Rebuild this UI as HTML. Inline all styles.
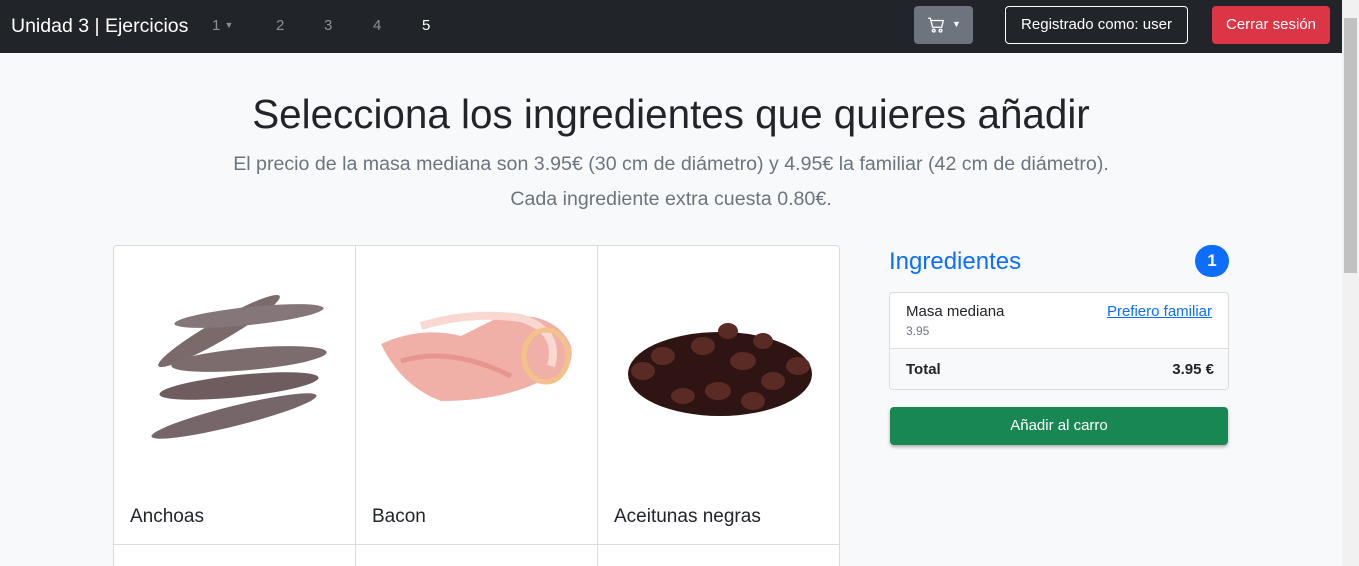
<!DOCTYPE html>
<html><head><meta charset="utf-8"><style>
*{box-sizing:border-box;margin:0;padding:0}
html,body{overflow:hidden}
body{width:1359px;height:566px;background:#f8f9fa;font-family:"Liberation Sans",sans-serif;color:#212529;position:relative}
.a{position:absolute;white-space:nowrap}
nav{position:absolute;left:0;top:0;width:1342px;height:53px;background:#212529}
.sb{position:absolute;left:1342px;top:0;width:17px;height:566px;background:#f1f1f1}
.sb div{position:absolute;left:2px;top:18px;width:13px;height:255px;background:#c1c1c1}
.card{position:absolute;top:245px;width:243px;height:300px;background:#fff;border:1px solid #dcdcdc}
.card .t{position:absolute;left:16px;top:260px;font-size:19px}
.row2{position:absolute;top:544px;width:243px;height:22px;background:#fff;border:1px solid #dcdcdc;border-bottom:none}
</style></head><body>
<nav>
<div class="a" style="left:11px;top:15px;color:#fff;font-size:19.5px">Unidad 3 | Ejercicios</div>
<div class="a" style="left:212px;top:17px;color:#8c8f93;font-size:15px">1 <span style="font-size:9px;vertical-align:2px">▼</span></div>
<div class="a" style="left:276px;top:17px;color:#8c8f93;font-size:15px">2</div>
<div class="a" style="left:324px;top:17px;color:#8c8f93;font-size:15px">3</div>
<div class="a" style="left:373px;top:17px;color:#8c8f93;font-size:15px">4</div>
<div class="a" style="left:422px;top:17px;color:#fff;font-size:15px">5</div>
<div class="a" style="left:914px;top:6px;width:59px;height:38px;background:#6c757d;border-radius:4px">
<svg width="18" height="18" viewBox="0 0 16 16" style="position:absolute;left:13px;top:10px" fill="none" stroke="#fff" stroke-width="1.2"><path d="M1 2h2l2 8h8l1.5-6H4"/><circle cx="6" cy="13" r="1.2"/><circle cx="12" cy="13" r="1.2"/></svg>
<span style="position:absolute;left:38px;top:13px;color:#fff;font-size:9px">▼</span></div>
<div class="a" style="left:1005px;top:6px;width:183px;height:38px;border:1px solid #fff;border-radius:4px;color:#fff;font-size:15px;text-align:center;line-height:36px">Registrado como: user</div>
<div class="a" style="left:1212px;top:6px;width:118px;height:38px;background:#dc3545;border-radius:4px;color:#fff;font-size:15px;text-align:center;line-height:38px">Cerrar sesión</div>
</nav>
<div class="sb"><div></div></div>
<div class="a" style="left:0;width:1342px;top:91px;text-align:center;font-size:40.4px;color:#212529">Selecciona los ingredientes que quieres añadir</div>
<div class="a" style="left:0;width:1342px;top:153px;text-align:center;font-size:19.6px;color:#6c757d">El precio de la masa mediana son 3.95€ (30 cm de diámetro) y 4.95€ la familiar (42 cm de diámetro).</div>
<div class="a" style="left:0;width:1342px;top:188px;text-align:center;font-size:19.6px;color:#6c757d">Cada ingrediente extra cuesta 0.80€.</div>

<div class="card" style="left:113px;border-radius:4px 0 0 0">
<svg class="a" style="left:25px;top:25px" width="200" height="190" viewBox="0 0 200 190">
<g fill="#7a6a6a">
<ellipse cx="80" cy="60" rx="70" ry="10" transform="rotate(-30 80 60)"/>
<ellipse cx="110" cy="45" rx="75" ry="9" transform="rotate(-6 110 45)" fill="#85767a"/>
<ellipse cx="110" cy="88" rx="78" ry="11" transform="rotate(-5 110 88)" fill="#7d6c6e"/>
<ellipse cx="100" cy="115" rx="80" ry="11" transform="rotate(-6 100 115)" fill="#6e5c5f"/>
<ellipse cx="95" cy="145" rx="85" ry="10" transform="rotate(-14 95 145)" fill="#76666a"/>
</g></svg>
<div class="t">Anchoas</div></div>
<div class="card" style="left:355px">
<svg class="a" style="left:25px;top:60px" width="200" height="120" viewBox="0 0 200 120">
<path d="M0 38 Q40 20 80 30 L120 10 Q175 5 190 40 Q195 70 160 75 Q120 95 60 95 Q20 80 0 38Z" fill="#f0b0a8"/>
<path d="M40 20 Q90 5 140 12 Q180 25 170 60" fill="none" stroke="#f8d8d0" stroke-width="8"/>
<ellipse cx="165" cy="50" rx="22" ry="26" fill="none" stroke="#f3c28a" stroke-width="5"/>
<path d="M20 55 Q70 40 130 70" stroke="#e89590" stroke-width="5" fill="none"/>
</svg>
<div class="t">Bacon</div></div>
<div class="card" style="left:597px;border-radius:0 4px 0 0">
<svg class="a" style="left:25px;top:70px" width="195" height="110" viewBox="0 0 195 110">
<ellipse cx="97" cy="58" rx="92" ry="42" fill="#2e1412"/>
<g fill="#5a2a25"><ellipse cx="20" cy="55" rx="12" ry="9"/><ellipse cx="40" cy="40" rx="12" ry="9"/><ellipse cx="80" cy="30" rx="12" ry="9"/><ellipse cx="120" cy="45" rx="13" ry="9"/><ellipse cx="150" cy="65" rx="12" ry="9"/><ellipse cx="175" cy="50" rx="12" ry="9"/><ellipse cx="95" cy="75" rx="13" ry="9"/><ellipse cx="60" cy="80" rx="12" ry="8"/><ellipse cx="130" cy="85" rx="12" ry="9"/><ellipse cx="105" cy="15" rx="10" ry="8"/><ellipse cx="140" cy="25" rx="10" ry="8"/></g>
</svg>
<div class="t">Aceitunas negras</div></div>
<div class="row2" style="left:113px"></div><div class="row2" style="left:355px"></div><div class="row2" style="left:597px"></div>

<div class="a" style="left:889px;top:248px;font-size:24px;color:#0d6efd">Ingredientes</div>
<div class="a" style="left:1195px;top:245px;width:34px;height:32px;border-radius:16px;background:#0d6efd;color:#fff;font-size:17px;font-weight:bold;text-align:center;line-height:32px">1</div>
<div class="a" style="left:889px;top:292px;width:340px;height:98px;border:1px solid #dcdcdc;border-radius:4px;background:#fff;overflow:hidden">
<div class="a" style="left:16px;top:10px;font-size:15px">Masa mediana</div>
<div class="a" style="left:16px;top:31px;font-size:12px;color:#6c757d">3.95</div>
<div class="a" style="right:16px;top:10px;font-size:15px;color:#0d6efd;text-decoration:underline">Prefiero familiar</div>
<div class="a" style="left:0;top:55px;width:340px;height:43px;border-top:1px solid #dcdcdc;background:#f8f9fa">
<div class="a" style="left:16px;top:12px;font-size:15px;font-weight:bold">Total</div>
<div class="a" style="right:16px;top:12px;font-size:15px;font-weight:bold">3.95 €</div></div>
</div>
<div class="a" style="left:890px;top:407px;width:338px;height:38px;background:#198754;border-radius:4px;color:#fff;font-size:15px;text-align:center;line-height:38px;box-shadow:0 2px 3px rgba(0,0,0,.3)">Añadir al carro</div>
</body></html>
